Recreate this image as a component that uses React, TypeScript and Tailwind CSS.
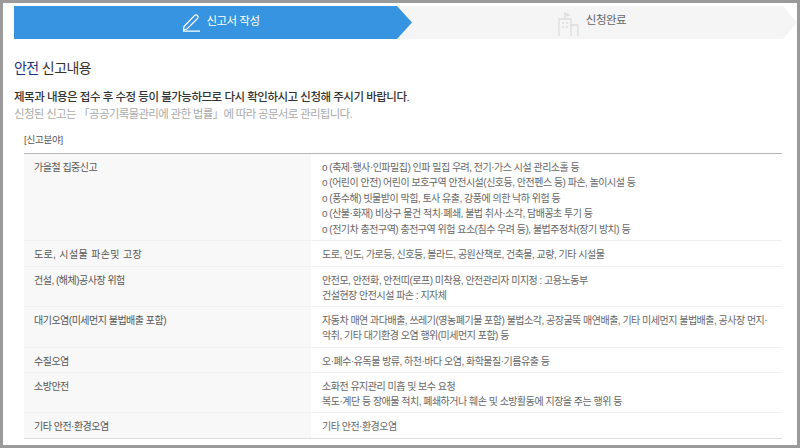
const rows = [
  {
    title: "가을철 집중신고",
    h: "h-[87px]",
    track: "tracking-[-0.5px]",
    lines: [
      "o (축제·행사·인파밀집) 인파 밀집 우려, 전기·가스 시설 관리소홀 등",
      "o (어린이 안전) 어린이 보호구역 안전시설(신호등, 안전펜스 등) 파손, 놀이시설 등",
      "o (풍수해) 빗물받이 막힘, 토사 유출, 강풍에 의한 낙하 위험 등",
      "o (산불·화재) 비상구 물건 적치·폐쇄, 불법 취사·소각, 담배꽁초 투기 등",
      "o (전기차 충전구역) 충전구역 위험 요소(침수 우려 등), 불법주정차(장기 방치) 등",
    ],
  },
  {
    title: "도로, 시설물 파손및 고장",
    h: "h-[26px]",
    track: "tracking-[0.35px]",
    lines: ["도로, 인도, 가로등, 신호등, 볼라드, 공원산책로, 건축물, 교량, 기타 시설물"],
  },
  {
    title: "건설, (해체)공사장 위험",
    h: "h-[40px]",
    track: "tracking-[-0.5px]",
    lines: [
      "안전모, 안전화, 안전띠(로프) 미착용, 안전관리자 미지정 : 고용노동부",
      "건설현장 안전시설 파손 : 지자체",
    ],
  },
  {
    title: "대기오염(미세먼지 불법배출 포함)",
    h: "h-[41px]",
    track: "tracking-[-0.5px]",
    lines: [
      "자동차 매연 과다배출, 쓰레기(영농폐기물 포함) 불법소각, 공장굴뚝 매연배출, 기타 미세먼지 불법배출, 공사장 먼지·",
      "악취, 기타 대기환경 오염 행위(미세먼지 포함) 등",
    ],
  },
  {
    title: "수질오염",
    h: "h-[25px]",
    track: "tracking-[-0.5px]",
    lines: ["오·폐수·유독물 방류, 하천·바다 오염, 화학물질·기름유출 등"],
  },
  {
    title: "소방안전",
    h: "h-[40px]",
    track: "tracking-[-0.5px]",
    lines: [
      "소화전 유지관리 미흡 및 보수 요청",
      "복도·계단 등 장애물 적치, 폐쇄하거나 훼손 및 소방활동에 지장을 주는 행위 등",
    ],
  },
  {
    title: "기타 안전·환경오염",
    h: "h-[26px]",
    track: "tracking-[-0.5px]",
    lines: ["기타 안전·환경오염"],
  },
];

const App = () => {
  return (
    <div className="w-[800px] h-[448px] overflow-hidden bg-[#9a9a9a] pt-[3px] pl-[3px] pr-[3px] pb-[3px] font-['Liberation_Sans','Noto_Sans_CJK_KR',sans-serif]">
      <div className="h-[442px] bg-white pt-[3px] pl-[11px]">
        <div className="flex h-[33px]">
          <div className="relative z-10 flex w-[398px] mr-[-20px] items-center justify-center gap-[5px] bg-[#3794e0] text-white text-[11.5px] tracking-[-0.5px] [clip-path:polygon(0_0,383px_0,398px_50%,383px_100%,0_100%)] pl-[16px]">
            <svg width="19" height="19" viewBox="0 0 19 19" fill="none" stroke="white" strokeWidth="1.2">
              <path d="M2 13.5 L12.5 2.5 Q14 1.2 15.5 2.5 Q16.8 4 15.5 5.5 L5 16 L1.5 17 Z" />
              <path d="M1 18.2 H18" />
            </svg>
            <span className="mt-[-1px]">신고서 작성</span>
          </div>
          <div className="flex flex-1 items-center justify-center gap-[5px] bg-[#f5f5f5] text-[#666] text-[11.5px] tracking-[-0.5px] pr-[32px] pl-[26px] [clip-path:polygon(0_0,calc(100%-14px)_0,100%_50%,calc(100%-14px)_100%,0_100%)]">
            <svg width="24" height="24" viewBox="0 0 24 24" fill="none" stroke="#dcdcdc" strokeWidth="1.3" className="mt-[3px]">
              <path d="M2 24 V7 H14 V24" />
              <path d="M8 7 V1 L12 3 L8 4" />
              <path d="M14 13 H21 V24" />
              <path d="M5 11 H7 M9 11 H11 M5 15 H7 M9 15 H11" />
            </svg>
            <span className="mt-[-3px]">신청완료</span>
          </div>
        </div>

        <h2 className="mt-[19px] text-[14px] leading-[20px] text-[#333] tracking-[-0.6px]">
          <span className="text-[#1a2f80]">안전</span> 신고내용
        </h2>
        <p className="mt-[11px] text-[11.5px] leading-[16px] text-[#333] font-medium tracking-[-0.5px]">
          제목과 내용은 접수 후 수정 등이 불가능하므로 다시 확인하시고 신청해 주시기 바랍니다.
        </p>
        <p className="mt-[1px] text-[11.5px] leading-[16px] text-[#aaa] tracking-[-0.7px]">
          신청된 신고는 「공공기록물관리에 관한 법률」에 따라 공문서로 관리됩니다.
        </p>

        <div className="ml-[10px] mt-[11px] w-[758px]">
          <div className="h-[20px] text-[9.5px] leading-[14px] text-[#555] tracking-[-0.2px]">[신고분야]</div>
          <div className="border-t border-[#b5b5b5]">
            {rows.map((row) => (
              <div key={row.title} className={`flex border-b border-[#f0f0f0] last:border-[#dedede] ${row.h}`}>
                <div className={`w-[287px] shrink-0 bg-[#f8f8f8] pl-[10px] pt-[5.5px] text-[10px] leading-[15.5px] text-[#555] ${row.track}`}>
                  {row.title}
                </div>
                <div className="flex-1 pl-[11px] pt-[5.5px] text-[10px] leading-[15.5px] text-[#666] tracking-[-0.5px] whitespace-nowrap">
                  {row.lines.map((line) => (
                    <div key={line}>{line}</div>
                  ))}
                </div>
              </div>
            ))}
          </div>
        </div>
      </div>
    </div>
  );
};

export default App;
